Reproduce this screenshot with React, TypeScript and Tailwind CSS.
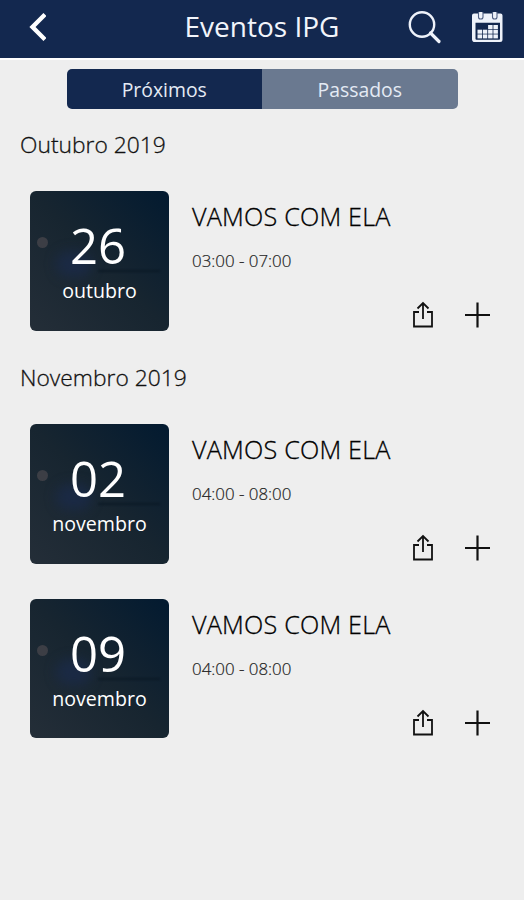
import { useState } from 'react'

const months = [
  {
    title: 'Outubro 2019',
    events: [{ id: 1, day: '26', month: 'outubro', name: 'VAMOS COM ELA', time: '03:00 - 07:00' }]
  },
  {
    title: 'Novembro 2019',
    events: [
      { id: 2, day: '02', month: 'novembro', name: 'VAMOS COM ELA', time: '04:00 - 08:00' },
      { id: 3, day: '09', month: 'novembro', name: 'VAMOS COM ELA', time: '04:00 - 08:00' }
    ]
  }
]

function BackIcon() {
  return (
    <svg width="18" height="30" viewBox="0 0 18 30" fill="none" stroke="#fff" strokeWidth="4.4">
      <path d="M17 2.5 4.5 15 17 27.5" />
    </svg>
  )
}

function SearchIcon() {
  return (
    <svg width="34" height="34" viewBox="0 0 34 34" fill="none" stroke="#eef2fa" strokeWidth="2.4">
      <circle cx="14" cy="13.5" r="12.2" />
      <path d="M22.5 22 31 30.5" strokeWidth="3.2" strokeLinecap="round" />
    </svg>
  )
}

// x/y positions of the white day cells, the first row starts late
const cells = [
  [16.1, 13], [21.4, 13],
  [5.5, 17.7], [10.8, 17.7], [16.1, 17.7], [21.4, 17.7],
  [5.5, 22.4], [10.8, 22.4], [16.1, 22.4], [21.4, 22.4]
]

function CalendarIcon() {
  return (
    <svg width="32" height="31" viewBox="0 0 32 31">
      <path d="M2 1.5h26.500a2 2 0 0 1 2 2v24a2.500 2.500 0 0 1-2.500 2.500h-25A2.500 2.500 0 0 1 0 27.500v-24a2 2 0 0 1 2-2z" fill="#eef2fa" />
      <path d="M3.5 10.8h24.500v16a1 1 0 0 1-1 1H4.500a1 1 0 0 1-1-1z" fill="#13284f" />
      {cells.map(([x, y]) => (
        <rect key={x + '-' + y} x={x} y={y} width="4.5" height="4" fill="#eef2fa" />
      ))}
      <rect x="6.5" y="-1" width="4.5" height="8" rx="2" fill="#eef2fa" stroke="#4f5f82" strokeWidth="1.1" />
      <rect x="20.5" y="-1" width="4.5" height="8" rx="2" fill="#eef2fa" stroke="#4f5f82" strokeWidth="1.1" />
    </svg>
  )
}

function ShareIcon() {
  return (
    <svg width="22" height="28" viewBox="0 0 22 28" fill="none" stroke="#111" strokeWidth="1.8">
      <path d="M7 11H2v14.500h18V11h-5" />
      <path d="M11 18V2.500M5.500 7.500 11 2l5.500 5.500" />
    </svg>
  )
}

function PlusIcon() {
  return (
    <svg width="26" height="26" viewBox="0 0 26 26" fill="none" stroke="#111" strokeWidth="2.2">
      <path d="M12.5 .5v25M0 13h25" />
    </svg>
  )
}

function EventRow({ event }) {
  return (
    <div className="flex h-[139.5px] pl-[30px] pr-[33px]">
      <div className="relative w-[139px] shrink-0 overflow-hidden rounded-md bg-linear-to-tr from-[#242e38] via-[#172530] to-[#031a30] text-center text-white">
        <div className="absolute top-[46px] left-[7px] size-[11px] rounded-full bg-[#3c3e45]" />
        <div className="absolute top-[60px] left-[26px] h-[26px] w-[36px] rounded-full bg-[#1b2b50]/60 blur-[6px]" />
        <div className="absolute top-[79px] left-[68px] h-[2px] w-[62px] bg-[#081522]/70 blur-[1px]" />
        <div className="relative pt-[29px] pr-[3px] text-[49px] leading-[50px]">{event.day}</div>
        <div className="relative mt-[7px] text-[19.6px] leading-[28px]">{event.month}</div>
      </div>
      <div className="flex flex-1 flex-col pl-[23px]">
        <h3 className="mt-[8px] text-[25.2px] leading-[34px] font-light tracking-[0.2px] whitespace-nowrap text-black [-webkit-text-stroke:0.3px_black]">
          {event.name}
        </h3>
        <p className="mt-[16px] text-[16.9px] leading-[24px] font-light text-[#222] [-webkit-text-stroke:0.2px_#222]">{event.time}</p>
        <div className="mt-[28px] flex items-center justify-end gap-[31px]">
          <button>
            <ShareIcon />
          </button>
          <button>
            <PlusIcon />
          </button>
        </div>
      </div>
    </div>
  )
}

function App() {
  const [tab, setTab] = useState('next')

  return (
    <div className="h-[900px] w-[524px] overflow-hidden bg-[#eee] font-['Open_Sans','Noto_Sans',sans-serif]">
      <header className="flex h-[60px] items-center border-b-2 border-white bg-[#13284f] pr-[20px] pl-[28px]">
        <button className="-mt-[4px]">
          <BackIcon />
        </button>
        <h1 className="-mt-[6px] flex-1 pl-[70px] text-center text-[28px] leading-[40px] text-[#f2f5fb]">Eventos IPG</h1>
        <button className="-mt-[2px] mr-[30px]">
          <SearchIcon />
        </button>
        <button className="-mt-[4px]">
          <CalendarIcon />
        </button>
      </header>

      <div className="mx-auto mt-[9px] flex h-[40px] w-[391px] overflow-hidden rounded-[5px] text-[19.4px] text-[#e4eaf4]">
        <button className={tab === 'next' ? 'flex-1 bg-[#13284f] pt-[2px]' : 'flex-1 bg-[#6a7990] pt-[2px]'} onClick={() => setTab('next')}>
          Próximos
        </button>
        <button className={tab === 'past' ? 'flex-1 bg-[#13284f] pt-[2px]' : 'flex-1 bg-[#6a7990] pt-[2px]'} onClick={() => setTab('past')}>
          Passados
        </button>
      </div>

      <main className="flex flex-col gap-[31.5px] pt-[20px]">
        {months.map((month) => (
          <section key={month.title}>
            <h2 className="pl-[20px] text-[22.8px] leading-[32px] font-light text-[#111] [-webkit-text-stroke:0.3px_#111]">{month.title}</h2>
            <div className="mt-[30px] flex flex-col gap-[35px]">
              {month.events.map((event) => (
                <EventRow key={event.id} event={event} />
              ))}
            </div>
          </section>
        ))}
      </main>
    </div>
  )
}

export default App
